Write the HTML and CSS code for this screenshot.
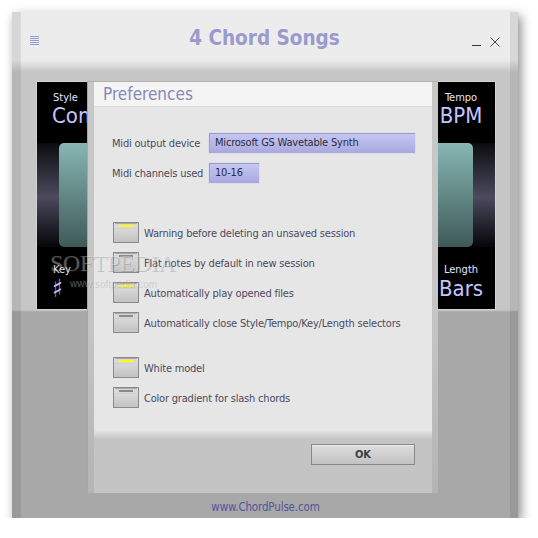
FILE: index.html
```html
<!DOCTYPE html>
<html>
<head>
<meta charset="utf-8">
<link rel="stylesheet" href="styles.css">
</head>
<body>
<div class="window">
  <div class="inner">
    <div class="titlebar">
      <div class="menu"><span></span><span></span><span></span><span></span><span></span></div>
      <div class="title">4 Chord Songs</div>
      <div class="controls">
        <span class="min"></span>
        <svg class="close" width="10" height="10" viewBox="0 0 10 10"><path d="M0.5 0.5 L9.5 9.5 M9.5 0.5 L0.5 9.5" stroke="#4a4a4a" stroke-width="1" fill="none"/></svg>
      </div>
    </div>
    <div class="stage">
      <div class="row top">
        <div class="cell left"><div class="lbl">Style</div><div class="val">Common</div></div>
        <div class="cell right"><div class="lbl">Tempo</div><div class="val">BPM</div></div>
      </div>
      <div class="row mid">
        <div class="glow"></div>
        <div class="pads"><div class="pad"></div><div class="pad"></div><div class="pad"></div><div class="pad"></div></div>
        <div class="glow"></div>
      </div>
      <div class="row bottom">
        <div class="cell left"><div class="lbl">Key</div><div class="val sharp">♯</div></div>
        <div class="cell right"><div class="lbl">Length</div><div class="val">Bars</div></div>
      </div>
    </div>
    <div class="footer">www.ChordPulse.com</div>
  </div>

  <div class="dialog">
    <div class="dlg-head">Preferences</div>
    <div class="dlg-body">
      <div class="fields">
        <div class="flabel">Midi output device</div>
        <div class="combo wide">Microsoft GS Wavetable Synth</div>
        <div class="flabel">Midi channels used</div>
        <div class="combo narrow">10-16</div>
      </div>
      <div class="checks">
        <div class="chk"><span class="cb on"></span><span>Warning before deleting an unsaved session</span></div>
        <div class="chk"><span class="cb"></span><span>Flat notes by default in new session</span></div>
        <div class="chk"><span class="cb on"></span><span>Automatically play opened files</span></div>
        <div class="chk"><span class="cb"></span><span>Automatically close Style/Tempo/Key/Length selectors</span></div>
      </div>
      <div class="checks second">
        <div class="chk"><span class="cb on"></span><span>White model</span></div>
        <div class="chk"><span class="cb"></span><span>Color gradient for slash chords</span></div>
      </div>
    </div>
    <div class="dlg-foot"><div class="btn">OK</div></div>
  </div>

  <div class="watermark">
    <div class="wm-big">SOFTPEDIA</div>
    <div class="wm-small">www.softpedia.com</div>
  </div>
</div>
</body>
</html>
```
FILE: styles.css
```css
html, body {
  margin: 0;
  padding: 0;
  background: #ffffff;
}
body {
  font-family: "DejaVu Sans Condensed", "DejaVu Sans", sans-serif;
}
.window {
  position: relative;
  margin: 12px 0 0 12px;
  width: 506px;
  height: 506px;
  padding: 0 8px;
  box-sizing: border-box;
  background:
    linear-gradient(rgba(0,0,0,0.09), rgba(0,0,0,0.09)),
    linear-gradient(to bottom, #ececec 0, #ececec 48px, #c8c8c8 60px, #c8c8c8 298px, #a8a8a8 300px, #a8a8a8 100%);
  box-shadow: 3px 4px 10px rgba(0,0,0,0.45);
}
.inner {
  height: 100%;
  display: flex;
  flex-direction: column;
  border-left: 1px solid rgba(0,0,0,0.08);
  box-sizing: border-box;
  background: linear-gradient(to bottom, #ececec 0, #ececec 48px, #c6c6c6 60px, #c6c6c6 298px, #a8a8a8 300px, #a8a8a8 100%);
}
.titlebar {
  height: 48px;
  display: grid;
  grid-template-columns: 1fr auto 1fr;
  align-items: center;
  padding: 0 10px 0 9px;
}
.menu {
  display: flex;
  flex-direction: column;
  gap: 1px;
  width: 9px;
  margin-top: 9px;
}
.menu span {
  height: 1px;
  background: #9a9ad0;
}
.title {
  font-weight: bold;
  font-size: 20.5px;
  color: #9a9acc;
  margin-top: 3px;
  margin-left: -1px;
}
.controls {
  display: flex;
  justify-content: flex-end;
  align-items: flex-end;
  gap: 9px;
  margin-top: 12px;
}
.min {
  width: 9px;
  height: 1px;
  background: #333;
  margin-bottom: 1px;
}
.close { display: block; }

.stage {
  margin: 21px 14px 0 15px;
  height: 229px;
  background: #000;
  border: 1px solid #d4d4d4;
  box-sizing: border-box;
  display: flex;
  flex-direction: column;
  color: #c8c8ff;
}
.row { display: flex; justify-content: space-between; }
.row.top { height: 61px; padding-top: 9px; box-sizing: border-box; }
.row.mid { height: 104px; }
.row.bottom { flex: 1; padding-top: 16px; box-sizing: border-box; }
.cell.left { padding-left: 16px; }
.cell.right { width: 52px; margin-right: 8px; text-align: center; }
.lbl {
  font-size: 11px;
  line-height: 13px;
  color: #e4e4ff;
}
.val {
  font-size: 22px;
  line-height: 24px;
  color: #c4c4ff;
  white-space: nowrap;
}
.val.sharp { font-size: 25px; line-height: 24px; }
.cell.left .val { margin-left: -1px; }
.row.bottom .val { margin-top: 1px; }
.glow {
  width: 22px;
  background: linear-gradient(to bottom, #0c0c10 0%, #2a2a36 25%, #4c4a5e 52%, #24242e 78%, #060608 100%);
}
.pads {
  flex: 1;
  display: flex;
  gap: 8px;
}
.pad {
  flex: 1;
  border-radius: 5px;
  background: linear-gradient(to bottom, #86b6b3, #3e5a58);
}
.footer {
  flex: 1;
  display: flex;
  justify-content: center;
  align-items: flex-end;
  padding-bottom: 4px;
  font-size: 11.5px;
  letter-spacing: -0.15px;
  color: #55539f;
}

.dialog {
  position: absolute;
  left: 75px;
  top: 69px;
  width: 351px;
  height: 412px;
  box-sizing: border-box;
  padding: 0 6px;
  background: linear-gradient(to bottom, #c8c8c8 0, #c4c4c4 60%, #b4b4b4 100%);
  border-left: 1px solid #a6a6a6;
  border-top: 1px solid #b0b0b0;
  display: flex;
  flex-direction: column;
}
.dlg-head {
  height: 25px;
  background: #f4f4f4;
  border-bottom: 1px solid #dadada;
  box-sizing: border-box;
  font-size: 17px;
  line-height: 24px;
  color: #8888b8;
  padding-left: 9px;
}
.dlg-body {
  flex: 1;
  background: #e6e6e6;
  padding: 25px 17px 0 18px;
  font-size: 11px;
  letter-spacing: -0.2px;
  color: #4a4a5e;
}
.fields {
  display: grid;
  grid-template-columns: 96px auto;
  row-gap: 8px;
  align-items: center;
  justify-items: start;
}
.combo {
  height: 22px;
  box-sizing: border-box;
  border: 1px solid #dedee6;
  box-shadow: inset 1px 1px 0 #9c9cc8;
  background: linear-gradient(to bottom, #c8c8f4, #a8a8de);
  color: #2c2c3e;
  line-height: 20px;
  padding-left: 6px;
}
.combo.wide { width: 208px; }
.combo.narrow { width: 52px; }
.checks {
  margin-top: 38px;
  display: flex;
  flex-direction: column;
  gap: 9px;
}
.checks.second { margin-top: 24px; }
.chk {
  display: flex;
  align-items: center;
  gap: 5px;
  height: 21px;
  padding-left: 1px;
  white-space: nowrap;
}
.chk span:last-child { margin-top: 1px; }
.cb {
  position: relative;
  width: 26px;
  height: 21px;
  flex: none;
  box-sizing: border-box;
  border: 1px solid #8a8a8a;
  background: linear-gradient(to bottom, #e2e2e2, #c2c2c2);
}
.cb::before {
  content: "";
  position: absolute;
  left: 1px;
  right: 1px;
  top: 0;
  height: 4px;
  border-top: 1px solid #a8a8a8;
  border-bottom: 1px solid #d0d0d0;
  background: #d8d8d8;
}
.cb::after {
  content: "";
  position: absolute;
  left: 5px;
  right: 5px;
  top: 2px;
  height: 2px;
  background: #8a8a8a;
}
.cb.on::after { background: #ffff00; }
.dlg-foot {
  height: 63px;
  background: linear-gradient(to bottom, #e6e6e6 0, #c4c4c4 9px, #c4c4c4 100%);
  display: flex;
  justify-content: flex-end;
  align-items: flex-start;
  padding: 14px 17px 0 0;
  box-sizing: border-box;
}
.btn {
  width: 104px;
  height: 21px;
  box-sizing: border-box;
  border: 1px solid #888;
  box-shadow: inset 0 1px 0 #ececec;
  background: linear-gradient(to bottom, #dedede, #c2c2c2);
  text-align: center;
  font-size: 11px;
  font-weight: bold;
  line-height: 19px;
  color: #3e3e48;
}
.watermark {
  position: absolute;
  left: 38px;
  top: 238px;
  pointer-events: none;
}
.wm-big {
  font-family: "Liberation Serif", serif;
  font-size: 24px;
  letter-spacing: -0.5px;
  line-height: 26px;
  color: rgba(235,235,235,0.35);
  text-shadow: 1px 1px 0 rgba(80,80,80,0.25);
}
.wm-small {
  font-family: "Liberation Sans", sans-serif;
  font-size: 10px;
  margin-left: 20px;
  margin-top: 2px;
  color: rgba(230,230,230,0.35);
  text-shadow: 1px 1px 0 rgba(80,80,80,0.2);
}
```
